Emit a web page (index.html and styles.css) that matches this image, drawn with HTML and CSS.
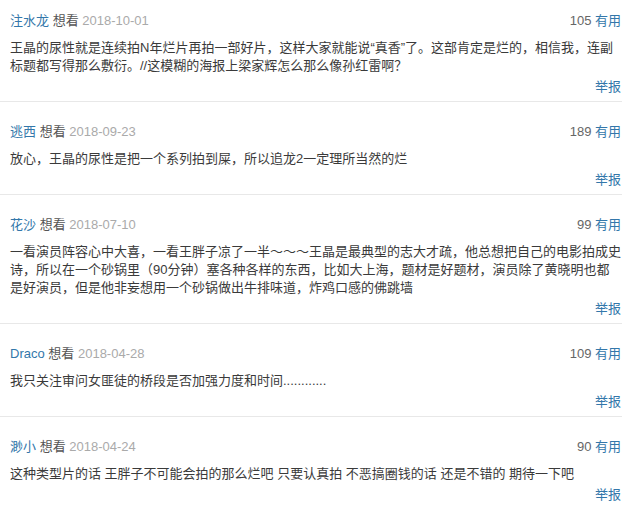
FILE: index.html
```html
<!DOCTYPE html>
<html lang="zh-CN">
<head>
    <meta charset="UTF-8">
    <meta name="viewport" content="width=device-width, initial-scale=1.0">
    <title>短评</title>
    <link rel="stylesheet" href="styles.css">
</head>
<body>

<div class="comments">
    <div class="comment">
        <div class="comment-head">
            <span class="info"><a href="#" class="user">注水龙</a> <span class="status">想看</span> <span class="time">2018-10-01</span></span>
            <span class="votes">105 <a href="#">有用</a></span>
        </div>
        <p>王晶的尿性就是连续拍N年烂片再拍一部好片，这样大家就能说“真香”了。这部肯定是烂的，相信我，连副标题都写得那么敷衍。//这模糊的海报上梁家辉怎么那么像孙红雷啊？</p>
        <div class="comment-foot"><a href="#">举报</a></div>
    </div>

    <div class="comment">
        <div class="comment-head">
            <span class="info"><a href="#" class="user">逃西</a> <span class="status">想看</span> <span class="time">2018-09-23</span></span>
            <span class="votes">189 <a href="#">有用</a></span>
        </div>
        <p>放心，王晶的尿性是把一个系列拍到屎，所以追龙2一定理所当然的烂</p>
        <div class="comment-foot"><a href="#">举报</a></div>
    </div>

    <div class="comment">
        <div class="comment-head">
            <span class="info"><a href="#" class="user">花沙</a> <span class="status">想看</span> <span class="time">2018-07-10</span></span>
            <span class="votes">99 <a href="#">有用</a></span>
        </div>
        <p>一看演员阵容心中大喜，一看王胖子凉了一半～～～王晶是最典型的志大才疏，他总想把自己的电影拍成史诗，所以在一个砂锅里（90分钟）塞各种各样的东西，比如大上海，题材是好题材，演员除了黄晓明也都是好演员，但是他非妄想用一个砂锅做出牛排味道，炸鸡口感的佛跳墙</p>
        <div class="comment-foot"><a href="#">举报</a></div>
    </div>

    <div class="comment">
        <div class="comment-head">
            <span class="info"><a href="#" class="user">Draco</a> <span class="status">想看</span> <span class="time">2018-04-28</span></span>
            <span class="votes">109 <a href="#">有用</a></span>
        </div>
        <p>我只关注审问女匪徒的桥段是否加强力度和时间............</p>
        <div class="comment-foot"><a href="#">举报</a></div>
    </div>

    <div class="comment">
        <div class="comment-head">
            <span class="info"><a href="#" class="user">渺小</a> <span class="status">想看</span> <span class="time">2018-04-24</span></span>
            <span class="votes">90 <a href="#">有用</a></span>
        </div>
        <p>这种类型片的话 王胖子不可能会拍的那么烂吧 只要认真拍 不恶搞圈钱的话 还是不错的 期待一下吧</p>
        <div class="comment-foot"><a href="#">举报</a></div>
    </div>
</div>

</body>
</html>
```

FILE: styles.css
```css
* {
    margin: 0;
    padding: 0;
    box-sizing: border-box;
}

body {
    font-family: "Liberation Sans", "Noto Sans CJK SC", sans-serif;
    font-size: 13px;
    background-color: #fff;
    color: #494949;
    overflow: hidden;
}

a {
    color: #37a;
    text-decoration: none;
}

/* list is cut off at the top of the shot */
.comments {
    width: 622px;
    margin-top: -9px;
}

.comment {
    padding: 21px 1px 5px 10px;
    border-bottom: 1px solid #e8e8e8;
}

.comment-head {
    display: flex;
    justify-content: space-between;
    line-height: 18px;
}

.comment-head .status {
    color: #555;
}

.comment-head .time {
    color: #aaa;
}

.comment-head .votes {
    color: #666;
}

.comment p {
    margin-top: 9px;
    line-height: 18px;
    color: #3a3a3a;
}

.comment-foot {
    margin-top: 3px;
    line-height: 18px;
    text-align: right;
}
```
